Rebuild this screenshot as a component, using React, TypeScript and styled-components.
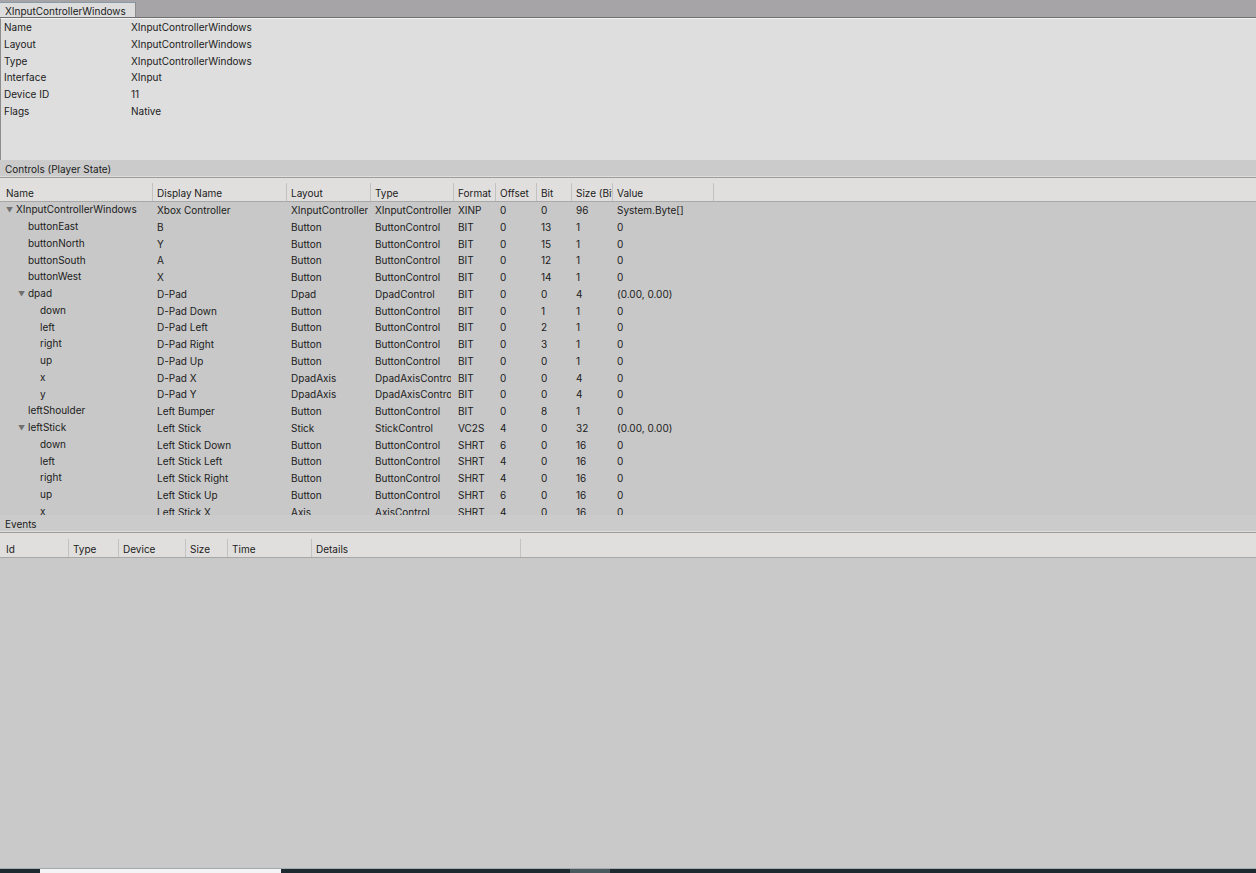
import React from 'react';
import styled, { createGlobalStyle } from 'styled-components';

const GlobalStyle = createGlobalStyle`
  html, body {
    margin: 0;
    padding: 0;
    background: #c9c9c9;
    overflow: hidden;
  }
  body {
    font-family: Inter, "Liberation Sans", Arial, sans-serif;
    font-size: 10px;
    color: #1b1b1b;
  }
`;

const Window = styled.div`
  width: 1256px;
  height: 873px;
  display: flex;
  flex-direction: column;
  background: #c9c9c9;
`;

const TabBar = styled.div`
  height: 17px;
  display: flex;
  align-items: flex-end;
  background: #a6a4a7;
  border-bottom: 1px solid #6f6f6f;
`;

const Tab = styled.div`
  width: 136px;
  height: 15px;
  line-height: 16px;
  padding-left: 5px;
  box-sizing: border-box;
  background: #dddddd;
  border-top: 1px solid #8a9ba8;
  border-right: 1px solid #8d8d8d;
`;

const InfoPanel = styled.div`
  height: 142px;
  box-sizing: border-box;
  background: #dedede;
  border-top: 1px solid #f2f2f2;
  border-left: 1px solid #8c8c8c;
`;

const InfoRow = styled.div`
  display: grid;
  grid-template-columns: 127px 1fr;
  height: 16.75px;
  line-height: 16.75px;
  padding-left: 3px;
`;

const SectionBar = styled.div`
  height: 16px;
  line-height: 18px;
  padding-left: 5px;
  background: #cbcbcb;
  border-bottom: 1px solid #dedede;
  box-shadow: 0 1px 0 #9c9c9c;
  margin-bottom: 1px;
  overflow: hidden;
`;

const HeaderRow = styled.div<{ $cols: string; $height: number }>`
  display: grid;
  grid-template-columns: ${({ $cols }) => $cols};
  height: ${({ $height }) => $height}px;
  align-items: end;
  background: #e0dfdd;
  border-bottom: 1px solid #a8a8a8;
  padding-left: 2px;
`;

const HeaderCell = styled.div`
  height: 18px;
  line-height: 20px;
  padding-left: 4px;
  border-right: 1px solid #c2c2c2;
  white-space: nowrap;
  overflow: hidden;
`;

const TableBody = styled.div`
  height: 313px;
  overflow: hidden;
  background: #c8c8c8;
`;

const Row = styled.div<{ $cols: string }>`
  display: grid;
  grid-template-columns: ${({ $cols }) => $cols};
  height: 16.75px;
  line-height: 16.75px;
  padding-left: 2px;
`;

const Cell = styled.div`
  padding-left: 4px;
  margin-right: 3px;
  white-space: nowrap;
  overflow: hidden;
`;

const NameCell = styled.div<{ $depth: number }>`
  display: flex;
  align-items: center;
  padding-left: ${({ $depth }) => 4 + $depth * 12}px;
  padding-bottom: 2px;
  margin-right: 3px;
  white-space: nowrap;
  overflow: hidden;
  line-height: 14px;
`;

const Foldout = styled.span<{ $show: boolean }>`
  width: 10px;
  flex: none;
  color: #707070;
  font-size: 7px;
  padding-top: 3px;
  visibility: ${({ $show }) => ($show ? 'visible' : 'hidden')};
`;

const EventsBody = styled.div`
  flex: 1;
  background: #c9c9c9;
`;

const Taskbar = styled.div`
  height: 4px;
  display: flex;
  background: #1d2a2f;
  border-top: 1px solid #a4abae;
`;

const TaskItem = styled.div<{ $left: number; $width: number; $color: string }>`
  margin-left: ${({ $left }) => $left}px;
  width: ${({ $width }) => $width}px;
  background: ${({ $color }) => $color};
`;

const controlCols = '151px 134px 84px 83px 42px 41px 35px 41px 101px';
const eventCols = '67px 50px 67px 42px 84px 209px';

const infoRows = [
  ['Name', 'XInputControllerWindows'],
  ['Layout', 'XInputControllerWindows'],
  ['Type', 'XInputControllerWindows'],
  ['Interface', 'XInput'],
  ['Device ID', '11'],
  ['Flags', 'Native'],
];

const controlHeaders = ['Name', 'Display Name', 'Layout', 'Type', 'Format', 'Offset', 'Bit', 'Size (Bits)', 'Value'];
const eventHeaders = ['Id', 'Type', 'Device', 'Size', 'Time', 'Details'];

type Control = {
  name: string;
  depth: number;
  open?: boolean;
  cells: string[];
};

const btn = (bit: string) => ['Button', 'ButtonControl', 'BIT', '0', bit, '1', '0'];
const shrt = (offset: string) => ['Button', 'ButtonControl', 'SHRT', offset, '0', '16', '0'];

const controls: Control[] = [
  { name: 'XInputControllerWindows', depth: 0, open: true, cells: ['Xbox Controller', 'XInputControllerWindows', 'XInputControllerWindows', 'XINP', '0', '0', '96', 'System.Byte[]'] },
  { name: 'buttonEast', depth: 1, cells: ['B', ...btn('13')] },
  { name: 'buttonNorth', depth: 1, cells: ['Y', ...btn('15')] },
  { name: 'buttonSouth', depth: 1, cells: ['A', ...btn('12')] },
  { name: 'buttonWest', depth: 1, cells: ['X', ...btn('14')] },
  { name: 'dpad', depth: 1, open: true, cells: ['D-Pad', 'Dpad', 'DpadControl', 'BIT', '0', '0', '4', '(0.00, 0.00)'] },
  { name: 'down', depth: 2, cells: ['D-Pad Down', ...btn('1')] },
  { name: 'left', depth: 2, cells: ['D-Pad Left', ...btn('2')] },
  { name: 'right', depth: 2, cells: ['D-Pad Right', ...btn('3')] },
  { name: 'up', depth: 2, cells: ['D-Pad Up', ...btn('0')] },
  { name: 'x', depth: 2, cells: ['D-Pad X', 'DpadAxis', 'DpadAxisControl', 'BIT', '0', '0', '4', '0'] },
  { name: 'y', depth: 2, cells: ['D-Pad Y', 'DpadAxis', 'DpadAxisControl', 'BIT', '0', '0', '4', '0'] },
  { name: 'leftShoulder', depth: 1, cells: ['Left Bumper', ...btn('8')] },
  { name: 'leftStick', depth: 1, open: true, cells: ['Left Stick', 'Stick', 'StickControl', 'VC2S', '4', '0', '32', '(0.00, 0.00)'] },
  { name: 'down', depth: 2, cells: ['Left Stick Down', ...shrt('6')] },
  { name: 'left', depth: 2, cells: ['Left Stick Left', ...shrt('4')] },
  { name: 'right', depth: 2, cells: ['Left Stick Right', ...shrt('4')] },
  { name: 'up', depth: 2, cells: ['Left Stick Up', ...shrt('6')] },
  { name: 'x', depth: 2, cells: ['Left Stick X', 'Axis', 'AxisControl', 'SHRT', '4', '0', '16', '0'] },
  { name: 'y', depth: 2, cells: ['Left Stick Y', 'Axis', 'AxisControl', 'SHRT', '6', '0', '16', '0'] },
];

function App() {
  return (
    <Window>
      <GlobalStyle />
      <TabBar>
        <Tab>XInputControllerWindows</Tab>
      </TabBar>
      <InfoPanel>
        {infoRows.map(([label, value]) => (
          <InfoRow key={label}>
            <span>{label}</span>
            <span>{value}</span>
          </InfoRow>
        ))}
      </InfoPanel>

      <SectionBar>Controls (Player State)</SectionBar>
      <HeaderRow $cols={controlCols} $height={23}>
        {controlHeaders.map(h => (
          <HeaderCell key={h}>{h}</HeaderCell>
        ))}
      </HeaderRow>
      <TableBody>
        {controls.map((c, i) => (
          <Row $cols={controlCols} key={i}>
            <NameCell $depth={c.depth}>
              <Foldout $show={!!c.open}>▼</Foldout>
              {c.name}
            </NameCell>
            {c.cells.map((v, j) => (
              <Cell key={j}>{v}</Cell>
            ))}
          </Row>
        ))}
      </TableBody>

      <SectionBar>Events</SectionBar>
      <HeaderRow $cols={eventCols} $height={24}>
        {eventHeaders.map(h => (
          <HeaderCell key={h}>{h}</HeaderCell>
        ))}
      </HeaderRow>
      <EventsBody />
      <Taskbar>
        <TaskItem $left={40} $width={241} $color="#f4f4f4" />
        <TaskItem $left={289} $width={40} $color="#4b5a5e" />
      </Taskbar>
    </Window>
  );
}

export default App;
